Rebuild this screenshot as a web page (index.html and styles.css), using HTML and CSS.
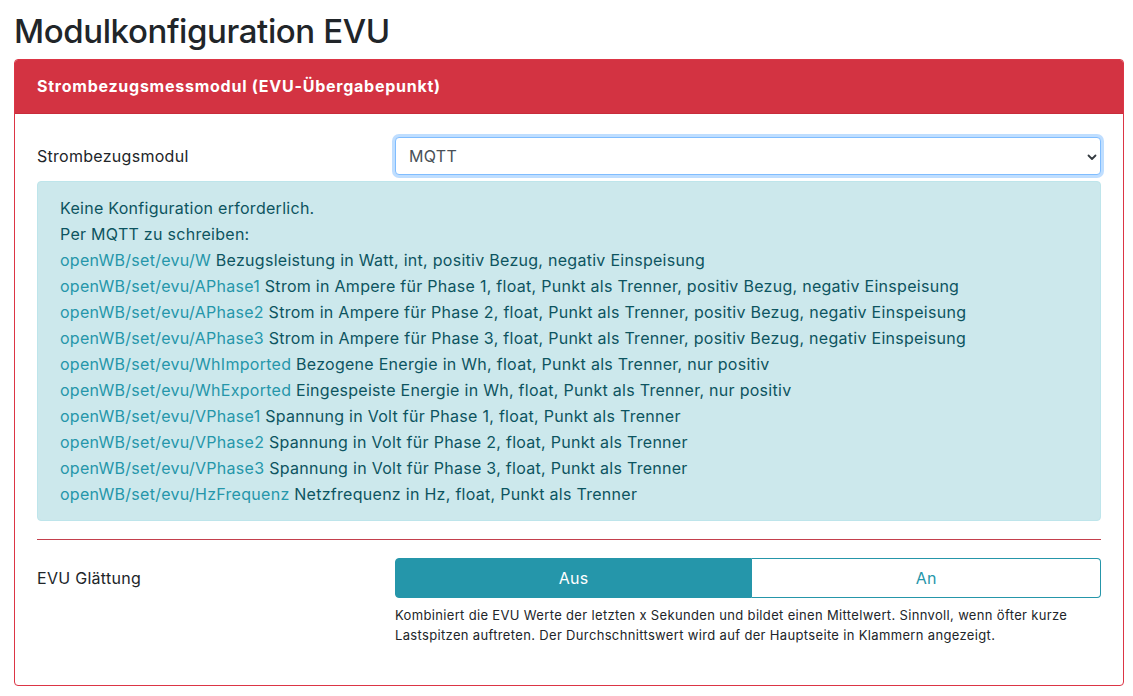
FILE: index.html
```html
<!DOCTYPE html>
<html lang="de">
<head>
    <meta charset="UTF-8">
    <meta name="viewport" content="width=device-width, initial-scale=1.0">
    <title>Modulkonfiguration EVU</title>
    <link rel="stylesheet" href="styles.css">
</head>
<body>
    <div class="page">
        <h1>Modulkonfiguration EVU</h1>

        <div class="card">
            <div class="card-header">Strombezugsmessmodul (EVU-Übergabepunkt)</div>
            <div class="card-body">
                <div class="form-row">
                    <label for="evuModul">Strombezugsmodul</label>
                    <div class="select-wrap">
                        <select id="evuModul" class="form-control">
                            <option>MQTT</option>
                        </select>
                        <svg class="select-arrow" width="10" height="8" viewBox="0 0 10 8">
                            <path d="M1.5 2.5 L5 6 L8.5 2.5" fill="none" stroke="#343a40" stroke-width="1.8" stroke-linecap="round" stroke-linejoin="round"/>
                        </svg>
                    </div>
                </div>

                <div class="alert-info">
                    Keine Konfiguration erforderlich.<br>
                    Per MQTT zu schreiben:<br>
                    <span class="topic">openWB/set/evu/W</span> Bezugsleistung in Watt, int, positiv Bezug, negativ Einspeisung<br>
                    <span class="topic">openWB/set/evu/APhase1</span> Strom in Ampere für Phase 1, float, Punkt als Trenner, positiv Bezug, negativ Einspeisung<br>
                    <span class="topic">openWB/set/evu/APhase2</span> Strom in Ampere für Phase 2, float, Punkt als Trenner, positiv Bezug, negativ Einspeisung<br>
                    <span class="topic">openWB/set/evu/APhase3</span> Strom in Ampere für Phase 3, float, Punkt als Trenner, positiv Bezug, negativ Einspeisung<br>
                    <span class="topic">openWB/set/evu/WhImported</span> Bezogene Energie in Wh, float, Punkt als Trenner, nur positiv<br>
                    <span class="topic">openWB/set/evu/WhExported</span> Eingespeiste Energie in Wh, float, Punkt als Trenner, nur positiv<br>
                    <span class="topic">openWB/set/evu/VPhase1</span> Spannung in Volt für Phase 1, float, Punkt als Trenner<br>
                    <span class="topic">openWB/set/evu/VPhase2</span> Spannung in Volt für Phase 2, float, Punkt als Trenner<br>
                    <span class="topic">openWB/set/evu/VPhase3</span> Spannung in Volt für Phase 3, float, Punkt als Trenner<br>
                    <span class="topic">openWB/set/evu/HzFrequenz</span> Netzfrequenz in Hz, float, Punkt als Trenner
                </div>

                <hr class="divider">

                <div class="form-row">
                    <label>EVU Glättung</label>
                    <div>
                        <div class="btn-group">
                            <button class="btn active">Aus</button>
                            <button class="btn">An</button>
                        </div>
                    </div>
                </div>
                <div class="form-row help-row">
                    <div></div>
                    <small class="form-text">Kombiniert die EVU Werte der letzten x Sekunden und bildet einen Mittelwert. Sinnvoll, wenn öfter kurze Lastspitzen auftreten. Der Durchschnittswert wird auf der Hauptseite in Klammern angezeigt.</small>
                </div>
            </div>
        </div>
    </div>
</body>
</html>
```

FILE: styles.css
```css
body {
    font-family: Inter, "Noto Sans", sans-serif;
    font-size: 16px;
    letter-spacing: 0.28px;
    color: #212529;
    background-color: #ffffff;
    margin: 0;
    padding: 0;
}
.page {
    padding: 0 9px 0 14px;
}
h1 {
    font-size: 33px;
    font-weight: 500;
    letter-spacing: -0.4px;
    line-height: 42px;
    margin: 10px 0 7px 0;
}
.card {
    border: 1px solid #dc3545;
    border-radius: 4px;
    height: 627px;
    box-sizing: border-box;
}
.card-header {
    background-color: #d33342;
    color: #ffffff;
    font-weight: 700;
    letter-spacing: 0.75px;
    padding: 15px 22px;
    line-height: 23px;
    border-bottom: 1px solid #c82c3b;
    border-radius: 3px 3px 0 0;
}
.card-body {
    padding: 23px 22px 20px 22px;
}
.form-row {
    display: grid;
    grid-template-columns: 358px 1fr;
    align-items: center;
}
.form-row label {
    line-height: 24px;
}
.select-wrap {
    position: relative;
}
.form-control {
    display: block;
    width: 100%;
    height: 38px;
    box-sizing: border-box;
    padding: 6px 13px;
    font-family: inherit;
    font-size: 16px;
    letter-spacing: inherit;
    color: #495057;
    background-color: #ffffff;
    border: 1px solid #80bdff;
    border-radius: 4px;
    box-shadow: 0 0 0 3px rgba(0, 123, 255, 0.25);
    outline: none;
    -webkit-appearance: none;
    appearance: none;
}
.select-arrow {
    position: absolute;
    right: 4px;
    top: 16px;
}
.alert-info {
    margin-top: 6px;
    padding: 13px 22px;
    line-height: 26px;
    background-color: #cce8ec;
    color: #0c5460;
    border: 1px solid #bee5eb;
    border-radius: 4px;
}
.alert-info .topic {
    color: #2596aa;
}
.divider {
    border: 0;
    border-top: 1px solid #c4404d;
    margin: 18px 0 18px 0;
}
.btn-group {
    display: flex;
}
.btn {
    flex: 349 1 0;
    height: 40px;
    font-family: inherit;
    font-size: 16px;
    letter-spacing: inherit;
    color: #2596aa;
    background-color: #ffffff;
    border: 1px solid #2596aa;
    cursor: pointer;
}
.btn:first-child {
    flex: 357 1 0;
    border-radius: 4px 0 0 4px;
}
.btn:last-child {
    border-radius: 0 4px 4px 0;
    border-left: 0;
}
.btn.active {
    background-color: #2596aa;
    color: #ffffff;
}
.help-row {
    margin-top: 7px;
}
.form-text {
    font-size: 13px;
    letter-spacing: 0.34px;
    line-height: 20px;
    color: #212529;
}
```
